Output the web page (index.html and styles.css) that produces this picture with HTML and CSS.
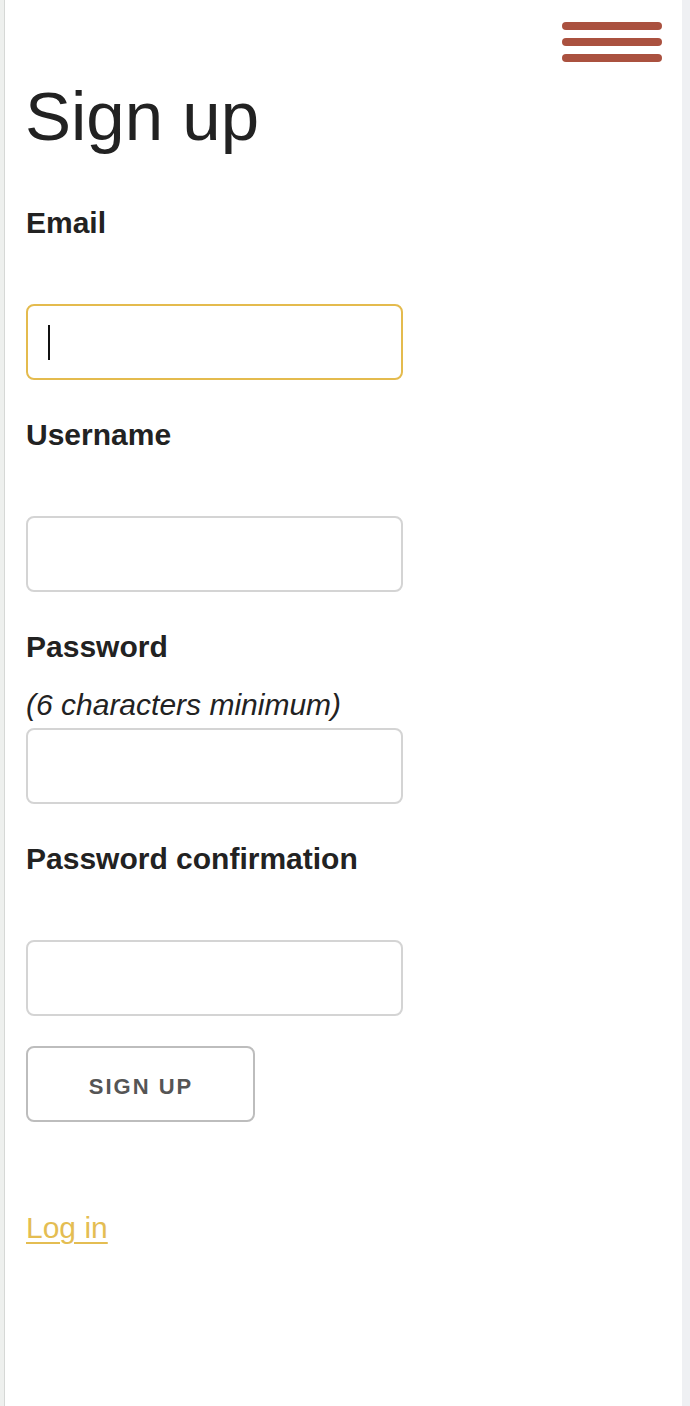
FILE: index.html
```html
<!DOCTYPE html>
<html lang="en">
<head>
<meta charset="utf-8">
<title>Sign up</title>
<link rel="stylesheet" href="styles.css">
</head>
<body>
<div class="page">
  <div class="edge-left"></div>
  <main class="main">
    <header class="topbar">
      <button class="menu" type="button" aria-label="Menu">
        <span class="bar"></span>
        <span class="bar"></span>
        <span class="bar"></span>
      </button>
    </header>
    <h1 class="title">Sign up</h1>
    <form class="form">
      <div class="field">
        <label class="label" for="email">Email</label>
        <div class="hint">&nbsp;</div>
        <div class="input-wrap">
          <input class="input input-focused" id="email" type="email">
          <span class="caret"></span>
        </div>
      </div>
      <div class="field">
        <label class="label" for="username">Username</label>
        <div class="hint">&nbsp;</div>
        <input class="input" id="username" type="text">
      </div>
      <div class="field">
        <label class="label" for="password">Password</label>
        <div class="hint"><em>(6 characters minimum)</em></div>
        <input class="input" id="password" type="password">
      </div>
      <div class="field field-last">
        <label class="label" for="confirm">Password confirmation</label>
        <div class="hint">&nbsp;</div>
        <input class="input" id="confirm" type="password">
      </div>
      <button class="submit" type="button">SIGN UP</button>
    </form>
    <div class="links">
      <a class="link" href="#">Log in</a>
    </div>
  </main>
  <div class="edge-right"></div>
</div>
</body>
</html>
```
FILE: styles.css
```css
html, body {
  margin: 0;
  padding: 0;
  background: #ffffff;
}

body {
  font-family: "Liberation Sans", Arial, Helvetica, sans-serif;
  color: #222222;
}

.page {
  display: flex;
  min-height: 1406px;
}

.edge-left {
  width: 4px;
  flex: 0 0 4px;
  background: #eef0ee;
  border-right: 1px solid #d6d8d6;
}

.edge-right {
  width: 8px;
  flex: 0 0 8px;
  background: #eff0f3;
}

.main {
  flex: 1;
  padding: 22px 20px 0 21px;
  min-width: 0;
}

.topbar {
  display: flex;
  justify-content: flex-end;
}

.menu {
  display: flex;
  flex-direction: column;
  gap: 8px;
  width: 100px;
  padding: 0;
  margin: 0;
  border: 0;
  background: transparent;
}

.bar {
  display: block;
  width: 100px;
  height: 8px;
  border-radius: 4px;
  background: #aa513f;
}

.title {
  margin: 17px 0 0 -1px;
  font-size: 69px;
  line-height: 76px;
  font-weight: 400;
  color: #222222;
}

.form {
  display: flex;
  flex-direction: column;
  align-items: flex-start;
  margin-top: 50px;
}

.field {
  display: flex;
  flex-direction: column;
  margin-bottom: 37px;
}

.field-last {
  margin-bottom: 30px;
}

.label {
  display: block;
  font-size: 30px;
  line-height: 36px;
  font-weight: 700;
  color: #222222;
  margin-bottom: 22px;
}

.hint {
  font-size: 30px;
  line-height: 36px;
  margin-bottom: 5px;
  color: #222222;
}

.hint em {
  font-style: italic;
}

.input-wrap {
  position: relative;
  width: 377px;
  height: 76px;
}

.input {
  box-sizing: border-box;
  display: block;
  width: 377px;
  height: 76px;
  margin: 0;
  padding: 0 20px;
  border: 2px solid #d4d4d4;
  border-radius: 8px;
  background: #ffffff;
  font-family: inherit;
  font-size: 30px;
  outline: none;
}

.input-focused {
  border-color: #e4bb4e;
}

.caret {
  position: absolute;
  left: 22px;
  top: 21px;
  width: 2px;
  height: 35px;
  background: #111111;
}

.submit {
  box-sizing: border-box;
  width: 229px;
  height: 76px;
  margin: 0;
  padding: 5px 0 0 1px;
  border: 2px solid #bdbdbd;
  border-radius: 8px;
  background: #ffffff;
  color: #555555;
  font-family: inherit;
  font-size: 22px;
  font-weight: 700;
  letter-spacing: 2px;
}

.links {
  margin-top: 88px;
  font-size: 30px;
  line-height: 36px;
}

.link {
  color: #e4bd52;
  text-decoration: underline;
  text-decoration-thickness: 2px;
  text-underline-offset: 4px;
}
```
